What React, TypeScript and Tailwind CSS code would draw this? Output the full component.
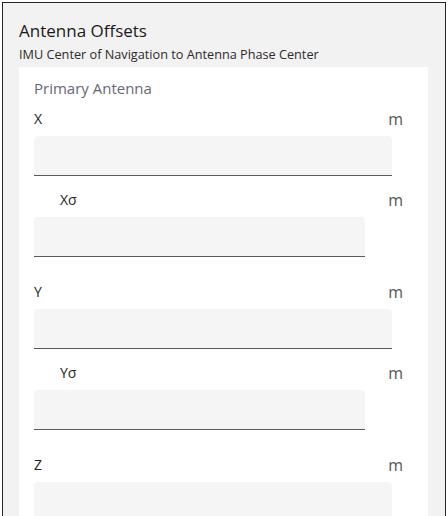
import React from 'react';

type Field = { label: string; sigma?: boolean };

const fields: Field[] = [
  { label: 'X' },
  { label: 'Xσ', sigma: true },
  { label: 'Y' },
  { label: 'Yσ', sigma: true },
  { label: 'Z' },
];

const OffsetField = ({ label, sigma, first }: Field & { first: boolean }) => (
  <div className={first ? 'mt-[10px]' : sigma ? 'mt-[13px]' : 'mt-[24px]'}>
    <div className="flex items-end justify-between pr-[10px]">
      <span className={`text-[14px] leading-5 text-[#222] ${sigma ? 'pl-[26px]' : ''}`}>{label}</span>
      <span className="text-[16px] leading-5 text-[#555] pt-px">m</span>
    </div>
    <input
      type="text"
      className={`mt-[7px] block h-[40px] rounded-t-[4px] border-b border-[#5a5a5a] bg-[#f5f5f5] px-3 outline-none ${
        sigma ? 'w-[331px]' : 'w-[358px]'
      }`}
    />
  </div>
);

const App: React.FC = () => {
  return (
    <div className="min-h-screen bg-white p-[2px]" style={{ fontFamily: '"Open Sans", "Noto Sans", sans-serif' }}>
      <div className="border border-[#262626] bg-[#f2f2f2] pt-4 pl-4 pr-[17px]">
        <h2 className="text-[17px] leading-6 text-[#1a1a1a]">Antenna Offsets</h2>
        <p className="mt-[3px] text-[12.7px] leading-4 text-[#2e2a2a]">IMU Center of Navigation to Antenna Phase Center</p>
        <div className="mt-[5px] bg-white px-[15px] pt-[11px] pb-6">
          <h3 className="text-[15px] leading-5 text-[#676775]">Primary Antenna</h3>
          {fields.map((f, i) => (
            <OffsetField key={f.label} {...f} first={i === 0} />
          ))}
        </div>
      </div>
    </div>
  );
};

export default App;
